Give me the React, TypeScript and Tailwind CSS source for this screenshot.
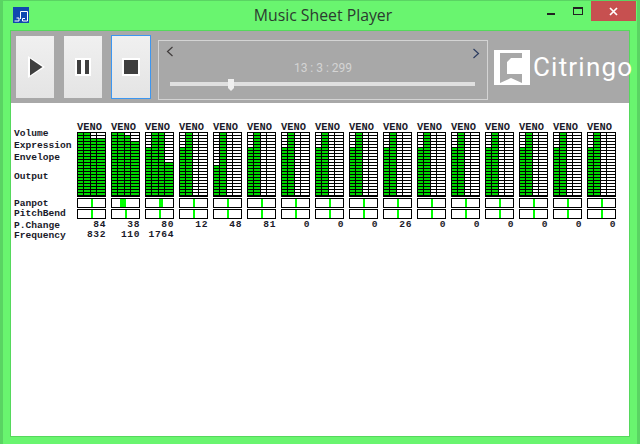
const mono = "font-['Liberation_Mono',monospace] font-bold text-[9.6px] text-[#1a1a2a]";

type Ch = { fill: [number, number, number, number]; pan: number; panW: number; pitch: number; prog: string; freq: string };

const off: [number, number, number, number] = [16, 21, 0, 0];
const channels: Ch[] = [
  { fill: [21, 21, 19, 19], pan: 13, panW: 2, pitch: 13, prog: "84", freq: "832" },
  { fill: [21, 21, 20, 18], pan: 8, panW: 6, pitch: 13, prog: "38", freq: "110" },
  { fill: [16, 21, 21, 11], pan: 13, panW: 4, pitch: 13, prog: "80", freq: "1764" },
  { fill: off, pan: 13, panW: 2, pitch: 13, prog: "12", freq: "" },
  { fill: [10, 21, 0, 0], pan: 13, panW: 2, pitch: 13, prog: "48", freq: "" },
  { fill: off, pan: 13, panW: 2, pitch: 13, prog: "81", freq: "" },
  { fill: off, pan: 13, panW: 2, pitch: 13, prog: "0", freq: "" },
  { fill: off, pan: 13, panW: 2, pitch: 13, prog: "0", freq: "" },
  { fill: off, pan: 13, panW: 2, pitch: 13, prog: "0", freq: "" },
  { fill: off, pan: 13, panW: 2, pitch: 13, prog: "26", freq: "" },
  { fill: off, pan: 13, panW: 2, pitch: 13, prog: "0", freq: "" },
  { fill: off, pan: 13, panW: 2, pitch: 13, prog: "0", freq: "" },
  { fill: off, pan: 13, panW: 2, pitch: 13, prog: "0", freq: "" },
  { fill: off, pan: 13, panW: 2, pitch: 13, prog: "0", freq: "" },
  { fill: off, pan: 13, panW: 2, pitch: 13, prog: "0", freq: "" },
  { fill: off, pan: 13, panW: 2, pitch: 13, prog: "0", freq: "" },
];

function Meter({ filled, wide }: { filled: number; wide?: boolean }) {
  return (
    <div className={`flex flex-col gap-px ${wide ? "w-[9px]" : "w-[6px]"}`}>
      {Array.from({ length: 21 }, (_, i) => (
        <div key={i} className={`h-[2px] ${i >= 21 - filled ? "bg-[#00d800]" : "bg-white"}`} />
      ))}
    </div>
  );
}

function Knob({ left, width }: { left: number; width: number }) {
  return (
    <div className="relative h-[10px] w-[29px] border border-black bg-white">
      <div className="absolute top-0 bottom-0 bg-[#00ff00]" style={{ left, width }} />
    </div>
  );
}

function Channel({ c }: { c: Ch }) {
  return (
    <div className="flex w-[29px] flex-col">
      <div className={`${mono} h-[9px] text-[10.4px] leading-[9px]`}>VENO</div>
      <div className="flex h-[65px] gap-px border border-black bg-black">
        <Meter filled={c.fill[0]} />
        <Meter filled={c.fill[1]} />
        <Meter filled={c.fill[2]} />
        <Meter filled={c.fill[3]} wide />
      </div>
      <div className="mt-px">
        <Knob left={c.pan} width={c.panW} />
      </div>
      <div className="mt-px">
        <Knob left={c.pitch} width={2} />
      </div>
      <div className={`${mono} mt-[1px] h-[10px] text-right leading-[10px] tracking-[0.6px]`}>{c.prog}</div>
      <div className={`${mono} h-[10px] whitespace-nowrap text-right leading-[10px] tracking-[0.6px]`}>{c.freq}</div>
    </div>
  );
}

function Transport({ active, children }: { active?: boolean; children: React.ReactNode }) {
  return (
    <div
      className={`flex shrink-0 items-center justify-center bg-gradient-to-b from-[#f0f0f0] to-[#e4e4e4] ${
        active ? "h-[64px] w-[40px] border border-[#3c96f0]" : "h-[62px] w-[38px]"
      }`}
    >
      {children}
    </div>
  );
}

export default function App() {
  return (
    <div className="flex h-[444px] w-[640px] flex-col overflow-hidden border-x-[3px] border-t border-x-[#5ad463] border-t-[#5ad463] bg-[#69f56f] font-['Open_Sans',sans-serif]">
      <div className="relative flex h-[29px] shrink-0 items-center justify-center">
        <svg className="absolute left-[10px] top-[6px]" width="16" height="16" viewBox="0 0 16 16">
          <rect width="16" height="16" fill="#1048b0" />
          <path d="M7.5 12V4.5H14.5V14H9.5V11.5H12M1.5 14H6V11H3.5" fill="none" stroke="#fff" strokeWidth="1" />
        </svg>
        <span className="ml-[6px] text-[15.8px] leading-none text-[#2c3a30]">Music Sheet Player</span>
        <div className="absolute right-[1px] top-0 flex items-start">
          <div className="mr-[18px] mt-[12px] h-[2px] w-[8px] bg-[#222]" />
          <div className="mr-[8px] mt-[6px] h-[8px] w-[10px] border border-t-2 border-[#222]" />
          <div className="flex h-[20px] w-[45px] items-center justify-center bg-[#c75050]">
            <svg width="9" height="9" viewBox="0 0 9 9">
              <path d="M1 1L8 8M8 1L1 8" stroke="#fff" strokeWidth="1.7" />
            </svg>
          </div>
        </div>
      </div>

      <div className="mx-[7px] flex min-h-0 flex-1 flex-col border border-[#55d85c] bg-white">
        <div className="flex h-[72px] shrink-0 items-center bg-[#a8a8a8] pl-[5px]">
          <Transport>
            <svg className="ml-[2px]" width="18" height="22" viewBox="0 0 18 22">
              <path d="M1 0L18 11L1 22Z" fill="#fff" />
              <path d="M3 2.5L15.5 11L3 19.5Z" fill="#3f3f3f" />
            </svg>
          </Transport>
          <div className="ml-[10px] shrink-0">
            <Transport>
              <div className="flex h-[18px] w-[16px] items-center justify-center gap-[4px] bg-white">
                <div className="h-[14px] w-[4px] bg-[#3f3f3f]" />
                <div className="h-[14px] w-[4px] bg-[#3f3f3f]" />
              </div>
            </Transport>
          </div>
          <div className="ml-[9px] shrink-0">
            <Transport active>
              <div className="flex h-[18px] w-[18px] items-center justify-center bg-white">
                <div className="h-[14px] w-[14px] bg-[#3f3f3f]" />
              </div>
            </Transport>
          </div>
          <div className="ml-[7px] mt-[6px] flex h-[60px] w-[330px] shrink-0 flex-col border border-[#d4d4d4] px-[7px] pt-[5px]">
            <div className="flex items-start justify-between">
              <svg width="8" height="11" viewBox="0 0 8 11">
                <path d="M6.5 1L1.5 5.5L6.5 10" fill="none" stroke="#403c3c" strokeWidth="1.2" />
              </svg>
              <svg className="mt-[2px]" width="8" height="11" viewBox="0 0 8 11">
                <path d="M1.5 1L6.5 5.5L1.5 10" fill="none" stroke="#2c3c60" strokeWidth="1.2" />
              </svg>
            </div>
            <div className="mt-[2px] text-center font-['Roboto',sans-serif] text-[12px] leading-[14px] text-[#d4d4d4]">
              13 : 3 : 299
            </div>
            <div className="relative mx-[4px] mt-[7px] h-[4px] w-[305px] bg-[#e0e0e0]">
              <div className="absolute left-[58px] top-[-3px] h-[12px] w-[6px] bg-[#efefef] [clip-path:polygon(0_0,100%_0,100%_75%,50%_100%,0_75%)]" />
            </div>
          </div>
          <div className="ml-[6px] flex shrink-0 items-center">
            <svg width="36" height="35" viewBox="0 0 36 35">
              <rect width="36" height="35" fill="#fff" />
              <path d="M6 3H28V8H17L13 12V24H28V33L17 28L6 33Z" fill="#a8a8a8" />
            </svg>
            <span className="ml-[3px] whitespace-nowrap font-['Roboto',sans-serif] text-[26px] font-normal leading-none tracking-[1.2px] text-white">
              Citringo
            </span>
          </div>
        </div>

        <div className="flex flex-1 pl-[3px] pt-[20px]">
          <div className={`${mono} w-[63px] shrink-0 pt-[5px]`}>
            <div className="h-[12px] leading-[12px]">Volume</div>
            <div className="h-[12px] leading-[12px]">Expression</div>
            <div className="h-[12px] leading-[12px]">Envelope</div>
            <div className="mt-[7px] h-[12px] leading-[12px]">Output</div>
            <div className="mt-[16px] h-[10px] leading-[10px]">Panpot</div>
            <div className="h-[10px] leading-[10px]">PitchBend</div>
            <div className="mt-[2px] h-[10px] leading-[10px]">P.Change</div>
            <div className="h-[10px] leading-[10px]">Frequency</div>
          </div>
          <div className="flex gap-[5px]">
            {channels.map((c, i) => (
              <Channel key={i} c={c} />
            ))}
          </div>
        </div>
      </div>
      <div className="h-[7px] shrink-0" />
    </div>
  );
}
